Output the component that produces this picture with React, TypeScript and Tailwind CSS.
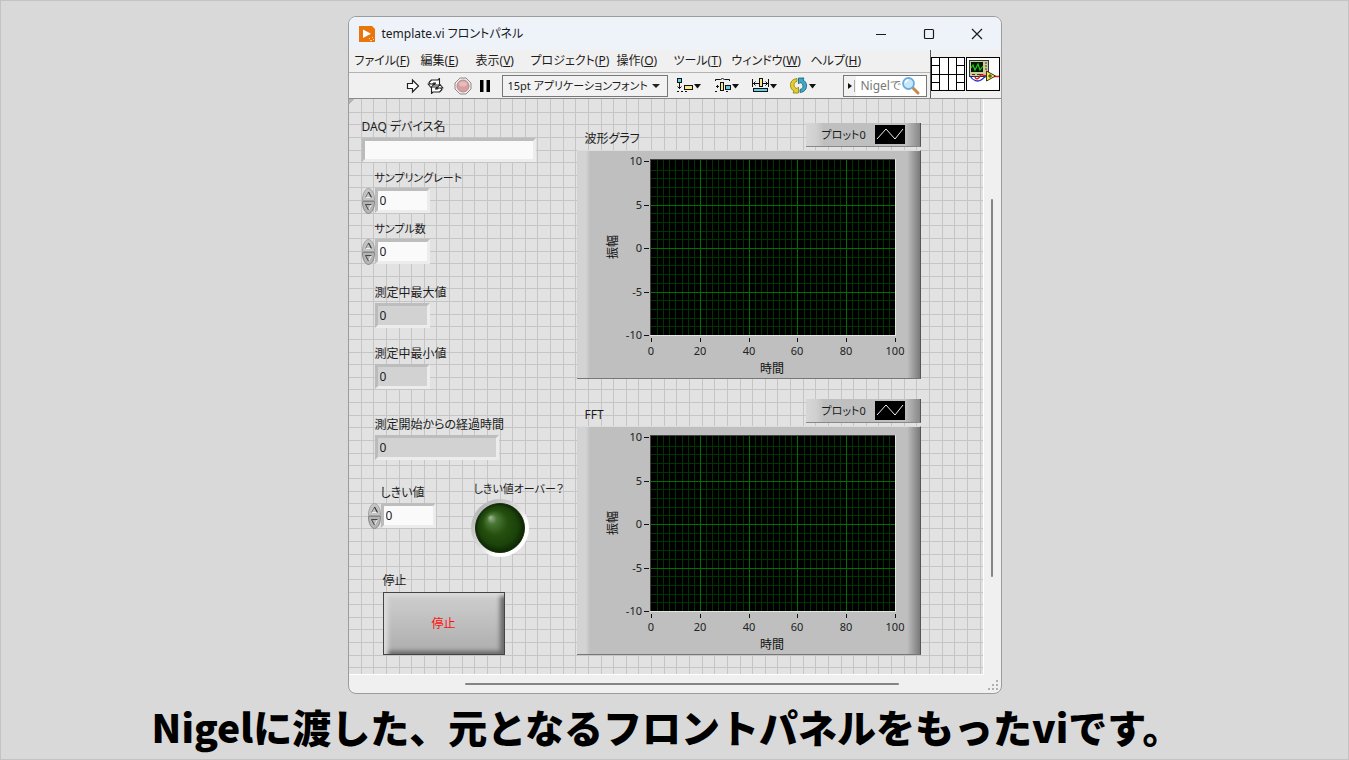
import React from 'react';

const menus = [
  { label: 'ファイル', key: 'F' },
  { label: '編集', key: 'E' },
  { label: '表示', key: 'V' },
  { label: 'プロジェクト', key: 'P' },
  { label: '操作', key: 'O' },
  { label: 'ツール', key: 'T' },
  { label: 'ウィンドウ', key: 'W' },
  { label: 'ヘルプ', key: 'H' },
];

function TitleBar() {
  return (
    <header className="flex h-[33px] items-center bg-[#eef3fa] pl-[9px]">
      <svg width="18" height="18" viewBox="0 0 18 18" aria-hidden="true">
        <path d="M1 1h13l3 3v13H1z" fill="#e8760a" />
        <path d="M5 4.5v8.5l8-4.2z" fill="#fff" />
        <path d="M11 13.5h1M13 15.5h1M14 12.5h1M15 14.5h1M12 15.5h1" stroke="#ffd9b0" />
      </svg>
      <h1 className="ml-1.5 text-[12px] leading-4 text-[#1a1a1a]">template.vi フロントパネル</h1>
      <div className="ml-auto flex">
        <button aria-label="最小化" className="flex w-12 justify-center">
          <svg width="12" height="12" viewBox="0 0 12 12"><path d="M1 6.5h10" stroke="#1a1a1a" /></svg>
        </button>
        <button aria-label="最大化" className="flex w-12 justify-center">
          <svg width="12" height="12" viewBox="0 0 12 12"><rect x="1.5" y="1.5" width="9" height="9" rx="1" fill="none" stroke="#1a1a1a" strokeWidth="1.2" /></svg>
        </button>
        <button aria-label="閉じる" className="flex w-12 justify-center">
          <svg width="12" height="12" viewBox="0 0 12 12"><path d="M1 1l10 10M11 1L1 11" stroke="#1a1a1a" strokeWidth="1.2" /></svg>
        </button>
      </div>
    </header>
  );
}

function MenuBar() {
  return (
    <nav className="grid h-[22px] grid-cols-[66px_55px_55px_86px_57px_58px_79px_60px] items-center pl-1.5 text-[12px] leading-4">
      {menus.map((m) => (
        <button key={m.key} className="text-left whitespace-nowrap">
          {m.label}(<span className="underline">{m.key}</span>)
        </button>
      ))}
    </nav>
  );
}

function Caret() {
  return <path d="M18 7h7l-3.5 4.5z" fill="#111" />;
}

function Toolbar() {
  return (
    <div className="flex h-[26px] items-center border-t border-[#b4b4b4] pl-[57px]">
      <button aria-label="実行">
        <svg width="14" height="16" viewBox="0 0 14 16">
          <path d="M1.5 5.5h5v-3.5l6 6-6 6v-3.5h-5z" fill="#fff" stroke="#222" strokeWidth="1.2" />
        </svg>
      </button>
      <button aria-label="連続実行" className="ml-[7px]">
        <svg width="17" height="16" viewBox="0 0 17 16" fill="#fff" stroke="#222" strokeWidth="1.1" strokeLinejoin="round">
          <path d="M2 4.5L4.500 2H11l1.500-1.500v6.500H6.500L8.500 5H6.500L4.500 7.500z" />
          <path d="M15 11.500L12.500 14H6l-1.500 1.500V9h6L8.500 11h2L12.500 8.500z" />
          <path d="M1 6h6L4 9.500zM16 10h-6l3-3.500z" />
        </svg>
      </button>
      <button aria-label="中断" className="ml-2.5">
        <svg width="18" height="18" viewBox="0 0 18 18">
          <path d="M6 1h6l5 5v6l-5 5H6l-5-5V6z" fill="#f2eeee" stroke="#8a8a8a" />
          <circle cx="9" cy="9" r="6" fill="#d7a0a0" stroke="#b98a8a" />
          <ellipse cx="9" cy="7" rx="4" ry="2.5" fill="#e4bcbc" />
        </svg>
      </button>
      <button aria-label="一時停止" className="ml-[7px]">
        <svg width="12" height="12" viewBox="0 0 12 12">
          <path d="M1 0h3.5v12H1zM7.5 0H11v12H7.5z" fill="#000" />
        </svg>
      </button>
      <div className="relative ml-[11px] h-[22px] w-[166px]">
        <select aria-label="フォント" className="block h-full w-full appearance-none border border-[#777] bg-[#f2f2f2] pl-[5px] text-[11px] leading-4">
          <option>15pt アプリケーションフォント</option>
        </select>
        <svg className="pointer-events-none absolute top-2 right-2" width="8" height="6" viewBox="0 0 8 6">
          <path d="M0 1h8L4 5z" fill="#222" />
        </svg>
      </div>
      <div className="ml-2 flex gap-3">
        <button aria-label="整列">
          <svg width="26" height="18" viewBox="0 0 26 18">
            <rect x="1.5" y="1.5" width="4" height="4" fill="#5fd0e8" stroke="#111" />
            <path d="M3.5 6v6M1.5 9.5l2 2 2-2M1 14.5h2M5 14.5h2M9 14.5h2" fill="none" stroke="#111" />
            <rect x="8.5" y="8.5" width="8" height="4" fill="#f4eb86" stroke="#111" />
            <Caret />
          </svg>
        </button>
        <button aria-label="間隔">
          <svg width="26" height="18" viewBox="0 0 26 18">
            <path d="M1.500 4v-1.500h5l2-1 2 1h5V4" fill="none" stroke="#111" />
            <path d="M2 9.500h3M3.500 8v3M1 14.5h2M12 14.5h2" stroke="#111" />
            <rect x="6.5" y="5.5" width="3" height="8" fill="#f4eb86" stroke="#111" />
            <rect x="11.5" y="8.5" width="5" height="4" fill="#5fd0e8" stroke="#111" />
            <Caret />
          </svg>
        </button>
        <button aria-label="サイズ変更">
          <svg width="26" height="18" viewBox="0 0 26 18">
            <path d="M.5 2v8M16.5 2v8M1 6.5h15M3.5 4.5l-2 2 2 2M13.5 4.5l2 2-2 2" fill="none" stroke="#111" />
            <rect x="7.5" y="1.5" width="3" height="8" fill="#f4eb86" stroke="#111" />
            <rect x="1.5" y="11.5" width="14" height="3" fill="#5fd0e8" stroke="#111" />
            <Caret />
          </svg>
        </button>
        <button aria-label="並べ替え">
          <svg width="26" height="18" viewBox="0 0 26 18" strokeLinejoin="round">
            <path d="M7 1.5C2.5 2 0 5 .5 9c.3 2.5 1.5 4 3.500 5l-1 2h5.500v-6L7 11.5C5 11 4 9.500 4 8c0-2 1-3 3-3.500z" fill="#e3cf2c" stroke="#8d7c12" strokeWidth=".8" />
            <path d="M10 15.5c4.500-.5 7-3.500 6.500-7.500-.3-2.500-1.500-4-3.500-5l1-2H8.500v6L10 5.500C12 6 13 7.500 13 9c0 2-1 3-3 3.500z" fill="#3aacc8" stroke="#165c70" strokeWidth=".8" />
            <path d="M19 7h7l-3.5 4.5z" fill="#111" />
          </svg>
        </button>
      </div>
      <label className="mr-[3px] ml-auto flex h-[22px] w-[84px] items-center border border-[#777] bg-white">
        <svg width="12" height="20" viewBox="0 0 12 20">
          <path d="M0 0h12v20H0z" fill="#f2f2f2" />
          <path d="M4 7v6l4-3z" fill="#111" />
          <path d="M10.5 4v12" stroke="#aaa" />
        </svg>
        <input aria-label="検索" placeholder="Nigelで" className="ml-[5px] w-10 min-w-0 bg-transparent text-[12px] leading-4 outline-none placeholder:text-[#777]" />
        <svg width="20" height="20" viewBox="0 0 20 20">
          <path d="M12 12l5 5" stroke="#c98748" strokeWidth="3" strokeLinecap="round" />
          <circle cx="7.5" cy="7.5" r="5.5" fill="#c8e8fa" stroke="#6aace0" strokeWidth="1.8" />
          <path d="M4.5 7a3 3 0 0 1 3-3" fill="none" stroke="#fff" strokeWidth="1.5" />
        </svg>
      </label>
    </div>
  );
}

function ViIcons() {
  return (
    <div className="flex items-start gap-px border-l border-[#555] pt-[7px] pr-px">
      <svg width="34" height="34" viewBox="0 0 34 34" aria-hidden="true">
        <rect x=".5" y=".5" width="33" height="33" fill="#fff" stroke="#000" />
        <path d="M8.5 0v34M17.5 0v34M25.5 0v34M0 17.5h34M0 8.5h8M0 25.5h8M26 8.5h8M26 25.5h8" stroke="#000" />
      </svg>
      <svg width="34" height="34" viewBox="0 0 34 34" aria-hidden="true">
        <rect x=".5" y=".5" width="33" height="33" fill="#fff" stroke="#000" />
        <rect x="3.5" y="3.5" width="19" height="16" fill="#cfcb9a" stroke="#333" />
        <rect x="5" y="5" width="12" height="10" fill="#001a00" />
        <path d="M5 11l2-3 2 5 3-6 2 6 3-4" fill="none" stroke="#27c427" strokeWidth="1.2" />
        <path d="M19 6h2M19 9h2M19 12h2M6 17.5h3M11 17.5h6" stroke="#333" />
        <path d="M4 19c3 5 8 6 11 4s5-5 7-4" fill="none" stroke="#1a2bd0" strokeWidth="1.3" />
        <path d="M9 20c1 3 4 2 5-1s4 1 7-1M28 19.5h5" fill="none" stroke="#e01818" strokeWidth="1.3" />
        <path d="M20.5 14v10l9-5z" fill="#f6ee2a" stroke="#333" />
        <path d="M22 19h4M24 17v4" stroke="#333" />
      </svg>
    </div>
  );
}

// alignment grid of the front panel, one line each 12.63px
function AlignmentGrid() {
  const lines = Array.from({ length: 160 }, (_, i) => Math.round(12.63 * (i + 1)));
  return (
    <svg className="absolute inset-0 h-full w-full" aria-hidden="true" shapeRendering="crispEdges">
      {lines.map((p) => (
        <g key={p} fill="#c5c5c5">
          <rect x={p - 1} y="0" width="1" height="100%" />
          <rect x="0" y={p} width="100%" height="1" />
        </g>
      ))}
      <path d="M0 0h5L0 5z" fill="#b5b5b5" />
    </svg>
  );
}

function Spinner({ name }: { name: string }) {
  return (
    <div className="flex w-[13px] flex-col">
      <button aria-label={`${name} 増加`}>
        <svg className="block" width="13" height="13" viewBox="0 0 13 13">
          <path d="M.5 12.5C.5 5 3.5.5 6.5.5s6 4.5 6 12z" fill="#c4c4c4" stroke="#a0a0a0" />
          <path d="M9.5 9.5h-6" stroke="#eee" />
          <path d="M3.5 9.500l3-5.500" stroke="#777" />
          <path d="M6.5 4l3 5.500" stroke="#333" strokeWidth="1.2" />
        </svg>
      </button>
      <button aria-label={`${name} 減少`}>
        <svg className="block" width="13" height="13" viewBox="0 0 13 13">
          <path d="M.5.5C.5 8 3.5 12.5 6.5 12.5s6-4.5 6-12z" fill="#b4b4b4" stroke="#858585" />
          <path d="M9.5 3.5L6.5 9" stroke="#eee" />
          <path d="M9.5 3.5h-6L6.5 9" fill="none" stroke="#444" />
        </svg>
      </button>
    </div>
  );
}

type FieldProps = {
  id: string;
  label: string;
  value: string;
  box?: string;
  text?: string;
  spinner?: boolean;
  readOnly?: boolean;
  className?: string;
};

function Field({ id, label, value, box = 'w-[55px]', text = 'text-[12px]', spinner, readOnly, className = '' }: FieldProps) {
  return (
    <div className={className}>
      <label htmlFor={id} className={`block h-5 leading-5 whitespace-nowrap ${text} ${spinner ? 'pl-[13px]' : ''}`}>
        {label}
      </label>
      <div className="flex h-[25px] items-center">
        {spinner && <Spinner name={label} />}
        <input
          id={id}
          defaultValue={value}
          readOnly={readOnly}
          className={`h-[25px] border-[3px] border-t-[#bdbdbd] border-r-[#ececec] border-b-[#ececec] border-l-[#bbbbbb] pl-0.5 text-[12px] leading-4 outline-none ${readOnly ? 'bg-[#d2d2d2]' : 'bg-[#fafafa]'} ${box}`}
        />
      </div>
    </div>
  );
}

function Led() {
  return (
    <div className="ml-[34px]">
      <p className="ml-1 h-5 w-24 text-[11px] leading-5 whitespace-nowrap">しきい値オーバー？</p>
      <svg width="60" height="60" viewBox="0 0 60 60" role="img" aria-label="しきい値オーバー？">
        <defs>
          <linearGradient id="ring" x1="0.15" y1="0.15" x2="0.85" y2="0.85">
            <stop offset="0" stopColor="#b8b8b8" />
            <stop offset="0.5" stopColor="#dedede" />
            <stop offset="0.75" stopColor="#fff" />
          </linearGradient>
          <radialGradient id="bulb" cx="0.5" cy="0.5" r="0.5" fx="0.3" fy="0.28">
            <stop offset="0" stopColor="#a3b898" />
            <stop offset="0.2" stopColor="#4a7636" />
            <stop offset="0.5" stopColor="#25500f" />
            <stop offset="0.8" stopColor="#1b420a" />
            <stop offset="1" stopColor="#0c2403" />
          </radialGradient>
        </defs>
        <circle cx="30" cy="29" r="29" fill="url(#ring)" />
        <circle cx="30" cy="29" r="24.5" fill="url(#bulb)" stroke="#1a2d10" />
      </svg>
    </div>
  );
}

const px = (v: number) => Math.round(v);

function Plot({ name }: { name: string }) {
  const minorX = Array.from({ length: 41 }, (_, i) => px(73 + i * 6.1));
  const minorY = Array.from({ length: 21 }, (_, i) => px(10 + i * 8.7));
  const xTicks = [0, 20, 40, 60, 80, 100];
  const yTicks = [10, 5, 0, -5, -10];
  return (
    <svg className="block" width="342" height="227" viewBox="0 0 342 227" role="img" aria-label={name}>
      <g shapeRendering="crispEdges">
        <rect x="72" y="8" width="246" height="177" fill="#e4e4e4" />
        <rect x="72" y="8" width="245" height="176" fill="#444" />
        <rect x="73" y="9" width="244" height="175" fill="#000" />
        {minorX.slice(1, -1).map((x) => <rect key={x} x={x} y="9" width="1" height="175" fill="#003400" />)}
        {minorY.slice(1, -1).map((y) => <rect key={y} x="73" y={y} width="244" height="1" fill="#003400" />)}
        {[1, 2, 3, 4].map((i) => <rect key={i} x={px(73 + i * 48.8)} y="9" width="1" height="175" fill="#007000" />)}
        {[1, 2, 3].map((i) => <rect key={i} x="73" y={px(10 + i * 43.5)} width="244" height="1" fill="#007000" />)}
        {xTicks.map((t, i) => <rect key={t} x={px(73 + i * 48.8)} y="187" width="1" height="4" fill="#111" />)}
        {yTicks.map((t, i) => <rect key={t} x="66" y={px(10 + i * 43.5)} width="5" height="1" fill="#111" />)}
      </g>
      <g fontSize="11" fill="#222">
        {xTicks.map((t, i) => (
          <text key={t} x={px(73 + i * 48.8)} y="204" textAnchor="middle">{t}</text>
        ))}
        {yTicks.map((t, i) => (
          <text key={t} x="64" y={px(14 + i * 43.5)} textAnchor="end">{t}</text>
        ))}
      </g>
      <g fontSize="12" fill="#111">
        <text x="194" y="222" textAnchor="middle">時間</text>
        <text transform="translate(39 96) rotate(-90)" textAnchor="middle">振幅</text>
      </g>
    </svg>
  );
}

function Graph({ title }: { title: string }) {
  return (
    <section className="w-[344px]">
      <div className="flex h-6 items-end">
        <h2 className="ml-2 text-[12px] leading-4">{title}</h2>
        <div className="ml-auto flex h-6 w-[115px] items-center justify-between border-r border-b border-r-[#555] border-b-[#888] bg-[linear-gradient(90deg,#d6d6d6_0,#d0d0d0_10px,#bfbfbf_18px,#bfbfbf_100px,#888_100%)] pr-[15px] pl-4">
          <span className="text-[11px] leading-4">プロット0</span>
          <svg width="30" height="19" viewBox="0 0 30 19" aria-hidden="true">
            <rect width="30" height="19" fill="#000" />
            <path d="M2 14l9-10 9 10 8-10" fill="none" stroke="#eee" />
          </svg>
        </div>
      </div>
      <div className="mt-[3px] border-t border-r border-b border-t-[#dcdcdc] border-r-[#555] border-b-[#777] bg-[linear-gradient(90deg,#d3d3d3_0,#d3d3d3_9px,#bfbfbf_13px,#bfbfbf_330px,#7a7a7a_100%)] pl-px">
        <Plot name={title} />
      </div>
    </section>
  );
}

export default function App() {
  return (
    <div className="min-h-screen overflow-hidden border border-[#c3c3c3] bg-[#d9d9d9] pt-[15px] font-['Noto_Sans','Noto_Sans_CJK_JP',sans-serif] text-[#1c1c1c] [font-feature-settings:'palt']">
      <main className="mx-auto w-[654px] overflow-hidden rounded-lg border border-[#9c9c9c] bg-[#f0f0f0]">
        <TitleBar />
        <div className="flex border-b border-[#8a8a8a]">
          <div className="flex-1">
            <MenuBar />
            <Toolbar />
          </div>
          <ViIcons />
        </div>
        <div className="flex">
          <div className="relative flex-1 overflow-hidden border-r border-b border-white bg-[#e2e2e2]">
            <AlignmentGrid />
            <div className="relative flex pb-[19px]">
              <div className="w-[228px] shrink-0 pt-[18px] pl-[13px]">
                <div>
                  <label htmlFor="daq" className="mb-px block h-5 text-[12px] leading-5">DAQ デバイス名</label>
                  <input id="daq" className="block h-6 w-[174px] border-[3px] border-t-[#bdbdbd] border-r-[#ececec] border-b-[#ececec] border-l-[#bbbbbb] bg-[#fafafa] text-[12px] outline-none" />
                </div>
                <Field id="rate" label="サンプリングレート" text="text-[11px]" value="0" spinner className="mt-1.5" />
                <Field id="samples" label="サンプル数" text="text-[11px]" value="0" spinner className="mt-1.5" />
                <Field id="max" label="測定中最大値" value="0" readOnly className="mt-[19px] ml-[13px]" />
                <Field id="min" label="測定中最小値" value="0" readOnly className="mt-4 ml-[13px]" />
                <Field id="elapsed" label="測定開始からの経過時間" value="0" readOnly box="w-[124px]" className="mt-[26px] ml-[13px]" />
                <div className="mt-[19px] ml-1.5 flex items-start">
                  <Field id="threshold" label="しきい値" value="0" spinner className="mt-1" />
                  <Led />
                </div>
                <div className="mt-3 ml-[21px]">
                  <p className="mb-px h-5 text-[12px] leading-5">停止</p>
                  <button className="block h-[63px] w-[122px] border border-[#444] bg-[linear-gradient(180deg,#cfcfcf,#adadad)] text-[12px] leading-4 text-[#ff1010] shadow-[inset_5px_4px_4px_-1px_#dcdcdc,inset_-5px_-4px_4px_-1px_#6a6a6a]">
                    停止
                  </button>
                </div>
              </div>
              <div className="flex flex-col gap-5 pt-6">
                <Graph title="波形グラフ" />
                <Graph title="FFT" />
              </div>
            </div>
          </div>
          <div className="flex w-[17px] justify-center pt-[100px]">
            <div className="h-[378px] w-0.5 rounded bg-[#858585]" />
          </div>
        </div>
        <div className="flex h-[18px] items-center justify-between pl-[116px]">
          <div className="h-0.5 w-[434px] rounded bg-[#858585]" />
          <svg width="16" height="16" viewBox="0 0 16 16" aria-hidden="true">
            <path d="M11 4h2v2h-2zM7 8h2v2H7zM11 8h2v2h-2zM3 12h2v2H3zM7 12h2v2H7zM11 12h2v2h-2z" fill="#b0b0b0" />
          </svg>
        </div>
      </main>
      <p className="mt-1 pr-4 text-center font-['Noto_Sans_CJK_JP',sans-serif] text-[39px] leading-[56px] font-black whitespace-nowrap text-black [font-feature-settings:normal]">
        Nigelに渡した、元となるフロントパネルをもったviです。
      </p>
    </div>
  );
}
